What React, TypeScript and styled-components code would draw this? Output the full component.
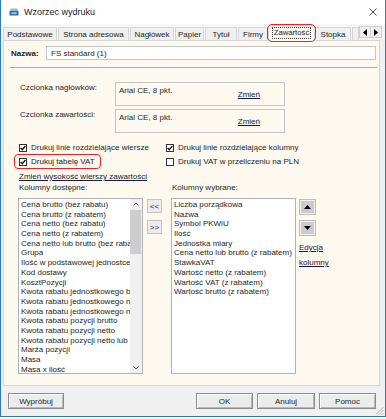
import React from "react";
import styled, { createGlobalStyle } from "styled-components";

const CREAM = "#fdf9ef";
const TEXT = "#1e1e1e";
const LINK = "#1a1a3a";

const GlobalStyle = createGlobalStyle`
  html, body { margin: 0; padding: 0; background: #ffffff; }
  body {
    font-family: "Liberation Sans", Arial, sans-serif;
    font-size: 8px;
    color: ${TEXT};
  }
  *, *::before, *::after { box-sizing: border-box; }
`;

const Window = styled.div`
  position: relative;
  width: 386px;
  height: 417px;
  display: flex;
  flex-direction: column;
  background: #f0f0f0;
  border: 1px solid #2b7bc6;
  border-top: none;
  overflow: hidden;
`;

const TitleBar = styled.div`
  flex: 0 0 24px;
  display: flex;
  align-items: center;
  padding: 0 0 1px 8px;
  background: #ffffff;
`;

const Title = styled.span`
  margin-left: 5px;
  font-size: 9px;
  color: #1a1a1a;
`;

const CloseIcon = styled.svg`
  margin-left: auto;
  margin-right: 8px;
`;

const TabStrip = styled.div`
  position: relative;
  z-index: 1;
  flex: 0 0 16px;
  display: flex;
  align-items: flex-end;
  gap: 1px;
  padding-left: 2px;
  background: #f7f7f7;
`;

const Tab = styled.div<{ $w: number; $active?: boolean }>`
  flex: 0 0 ${(p) => p.$w}px;
  height: ${(p) => (p.$active ? 16 : 13)}px;
  margin-bottom: ${(p) => (p.$active ? -1 : 0)}px;
  display: flex;
  align-items: center;
  justify-content: center;
  border: 1px solid #d6d6d6;
  border-bottom: none;
  background: ${(p) => (p.$active ? CREAM : "#f0f0f0")};
  white-space: nowrap;
  ${(p) =>
    p.$active
      ? `
    position: relative;
    z-index: 2;
    margin-left: -1px;
    margin-right: -1px;
    border-radius: 4px;
    outline: 1.5px solid #e2262c;
    padding-bottom: 1px;
  `
      : "overflow: hidden;"}
`;

const FocusText = styled.span`
  flex: none;
  padding: 0 1px;
  border: 1px dotted #444;
  font-size: 7.7px;
  line-height: 10px;
`;

const TabArrows = styled.div`
  flex: 0 0 23px;
  height: 12px;
  margin: 0 0 2px -1px;
  display: flex;
  border: 1px solid #cfcfcf;
  background: #f0f0f0;
`;

const ArrowHalf = styled.div`
  flex: 1;
  display: flex;
  align-items: center;
  justify-content: center;
  & + & { border-left: 1px solid #cfcfcf; }
`;

const Panel = styled.div`
  flex: 0 0 346px;
  margin: 0 5px 0 2px;
  display: flex;
  flex-direction: column;
  padding: 5px 2px 0 6px;
  background: ${CREAM};
  border: 1px solid #d6d6d6;
`;

const NameRow = styled.div`
  display: flex;
  align-items: center;
  height: 14px;
`;

const NameLabel = styled.span`
  flex: 0 0 36px;
  padding-left: 1px;
  font-weight: bold;
`;

const TextInput = styled.div`
  flex: 1;
  height: 14px;
  margin-right: 1px;
  padding-left: 4px;
  display: flex;
  align-items: center;
  background: #ffffff;
  border: 1px solid #c4c4c4;
`;

const Separator = styled.div`
  margin-top: 7px;
  height: 2px;
  border-top: 1px solid #a8a8a8;
  border-bottom: 1px solid #ffffff;
`;

const FontRow = styled.div<{ $gap: number }>`
  display: flex;
  margin-top: ${(p) => p.$gap}px;
  padding-left: 10px;
`;

const FontLabel = styled.span`
  flex: 0 0 95px;
  padding-top: 1px;
  line-height: 9px;
`;

const FontBox = styled.div`
  flex: 0 0 170px;
  height: 24px;
  display: flex;
  justify-content: space-between;
  padding: 3px 24px 0 3px;
  border: 1px solid #c4c4c4;
  line-height: 9px;
`;

const Link = styled.span`
  color: ${LINK};
  text-decoration: underline;
  line-height: 9px;
  white-space: nowrap;
`;

const BoxLink = styled(Link)`
  align-self: center;
  margin-top: -3px;
`;

const CheckGrid = styled.div`
  margin-top: 8px;
  padding-left: 9px;
  display: grid;
  grid-template-columns: 147px 1fr;
  grid-auto-rows: 13px;
  row-gap: 1px;
`;

const CheckItem = styled.label`
  display: flex;
  align-items: center;
  gap: 4px;
  white-space: nowrap;
`;

const Marked = styled(CheckItem)`
  justify-self: start;
  margin-left: -4px;
  padding: 0 5px 0 4px;
  border-radius: 3px;
  outline: 1.5px solid #e2262c;
`;

const Box = styled.span`
  flex: 0 0 8px;
  height: 8px;
  display: flex;
  align-items: center;
  justify-content: center;
  border: 1px solid #333333;
  background: #ffffff;
`;

const LinkRow = styled.div`
  margin-top: 4px;
  padding-left: 9px;
  line-height: 9px;
`;

const ColumnsArea = styled.div`
  margin-top: 2px;
  padding-left: 8px;
  display: flex;
`;

const Col = styled.div<{ $w?: number; $ml?: number }>`
  ${(p) => (p.$w ? `flex: 0 0 ${p.$w}px; width: ${p.$w}px;` : "")}
  min-width: 0;
  margin-left: ${(p) => p.$ml ?? 0}px;
  display: flex;
  flex-direction: column;
`;

const ColLabel = styled.span`
  height: 9px;
  line-height: 9px;
  padding-left: 1px;
  margin-bottom: 6px;
  white-space: nowrap;
`;

const ListBox = styled.div`
  height: 176px;
  display: flex;
  overflow: hidden;
  background: #ffffff;
  border: 1px solid #b2b2b2;
`;

const Items = styled.div`
  flex: 1;
  min-width: 0;
  overflow: hidden;
  padding: 1px 0 0 2px;
`;

const Item = styled.div`
  height: 9.7px;
  line-height: 9.7px;
  white-space: nowrap;
`;

const Scrollbar = styled.div`
  flex: 0 0 12px;
  display: flex;
  flex-direction: column;
  align-items: center;
  background: #f0f0f0;
  padding: 3px 1px 3px 0;
`;

const Thumb = styled.div`
  align-self: stretch;
  margin: 4px 0 0 0;
  height: 44px;
  background: #cdcdcd;
`;

const SmallBtn = styled.div<{ $mt: number }>`
  margin-top: ${(p) => p.$mt}px;
  height: 14px;
  display: flex;
  align-items: center;
  justify-content: center;
  background: #ececec;
  border: 1px solid #c4c4c4;
  font-size: 8px;
`;

const MoveBtn = styled.div<{ $mt: number }>`
  margin-top: ${(p) => p.$mt}px;
  width: 17px;
  height: 16px;
  display: flex;
  align-items: center;
  justify-content: center;
  background: #cbcbcb;
  border: 1px solid #bdbdbd;
  box-shadow: inset 0 0 0 1px #f2f2f2;
`;

const SideLink = styled(Link)<{ $mt: number }>`
  display: block;
  margin-top: ${(p) => p.$mt}px;
  height: 9px;
`;

const ButtonBar = styled.div`
  flex: 1;
  display: flex;
  align-items: flex-start;
  gap: 4px;
  padding: 7px 9px 0 7px;
`;

const Button = styled.div<{ $w: number }>`
  flex: 0 0 ${(p) => p.$w}px;
  height: 16px;
  display: flex;
  align-items: center;
  justify-content: center;
  background: #ececec;
  border: 1px solid #8c8c8c;
  box-shadow: inset 1px 1px 0 #ffffff, inset -1px -1px 0 #b8b8b8;
`;

const Spacer = styled.div`
  flex: 1;
`;

const Grip = styled.svg`
  position: absolute;
  right: 1px;
  bottom: 1px;
`;

const tabs = [
  { label: "Podstawowe", w: 54 },
  { label: "Strona adresowa", w: 71 },
  { label: "Nagłówek", w: 44 },
  { label: "Papier", w: 29 },
  { label: "Tytuł", w: 32 },
  { label: "Firmy", w: 30 },
  { label: "Zawartość", w: 47, active: true },
  { label: "Stopka", w: 36 },
  { label: "", w: 7 },
];

const available = [
  "Cena brutto (bez rabatu)",
  "Cena brutto (z rabatem)",
  "Cena netto (bez rabatu)",
  "Cena netto (z rabatem)",
  "Cena netto lub brutto (bez rabatu)",
  "Grupa",
  "Ilość w podstawowej jednostce",
  "Kod dostawy",
  "KosztPozycji",
  "Kwota rabatu jednostkowego brutto",
  "Kwota rabatu jednostkowego netto",
  "Kwota rabatu jednostkowego netto lub brutto",
  "Kwota rabatu pozycji brutto",
  "Kwota rabatu pozycji netto",
  "Kwota rabatu pozycji netto lub brutto",
  "Marża pozycji",
  "Masa",
  "Masa x ilość",
];

const chosen = [
  "Liczba porządkowa",
  "Nazwa",
  "Symbol PKWiU",
  "Ilość",
  "Jednostka miary",
  "Cena netto lub brutto (z rabatem)",
  "StawkaVAT",
  "Wartość netto (z rabatem)",
  "Wartość VAT (z rabatem)",
  "Wartość brutto (z rabatem)",
];

function Check({ on }: { on?: boolean }) {
  return (
    <Box>
      {on && (
        <svg width="6" height="6" viewBox="0 0 6 6">
          <path d="M0.6 3 L2.3 4.7 L5.4 1" fill="none" stroke="#111" strokeWidth="1.3" />
        </svg>
      )}
    </Box>
  );
}

function Triangle({ dir }: { dir: "up" | "down" | "left" | "right" }) {
  const pts = {
    up: "0,4 3.5,0 7,4",
    down: "0,0 7,0 3.5,4",
    left: "4,0 4,7 0,3.5",
    right: "0,0 0,7 4,3.5",
  }[dir];
  const vertical = dir === "up" || dir === "down";
  return (
    <svg width={vertical ? 7 : 4} height={vertical ? 4 : 7} viewBox={vertical ? "0 0 7 4" : "0 0 4 7"}>
      <polygon points={pts} fill="#000" />
    </svg>
  );
}

function Chevron({ up }: { up?: boolean }) {
  return (
    <svg width="6" height="4" viewBox="0 0 6 4">
      <path d={up ? "M0.5 3.5 L3 1 L5.5 3.5" : "M0.5 0.5 L3 3 L5.5 0.5"} fill="none" stroke="#555" strokeWidth="1" />
    </svg>
  );
}

export default function App() {
  return (
    <>
      <GlobalStyle />
      <Window>
        <TitleBar>
          <svg width="10" height="8" viewBox="0 0 10 8">
            <path d="M2 0.5 H8 L9.5 3 H0.5 Z" fill="#9fb6cc" />
            <rect x="0.5" y="3" width="9" height="4.5" fill="#2f6fb0" />
            <rect x="2.5" y="4.5" width="5" height="1.2" fill="#dfe9f4" />
          </svg>
          <Title>Wzorzec wydruku</Title>
          <CloseIcon width="8" height="8" viewBox="0 0 8 8">
            <path d="M0.5 0.5 L7.5 7.5 M7.5 0.5 L0.5 7.5" stroke="#333" strokeWidth="0.9" />
          </CloseIcon>
        </TitleBar>

        <TabStrip>
          {tabs.map((t, i) => (
            <Tab key={i} $w={t.w} $active={t.active}>
              {t.active ? <FocusText>{t.label}</FocusText> : t.label}
            </Tab>
          ))}
          <TabArrows>
            <ArrowHalf>
              <Triangle dir="left" />
            </ArrowHalf>
            <ArrowHalf>
              <Triangle dir="right" />
            </ArrowHalf>
          </TabArrows>
        </TabStrip>

        <Panel>
          <NameRow>
            <NameLabel>Nazwa:</NameLabel>
            <TextInput>FS standard (1)</TextInput>
          </NameRow>

          <Separator />

          <FontRow $gap={13}>
            <FontLabel>Czcionka nagłówków:</FontLabel>
            <FontBox>
              <span>Arial CE, 8 pkt.</span>
              <BoxLink>Zmień</BoxLink>
            </FontBox>
          </FontRow>
          <FontRow $gap={3}>
            <FontLabel>Czcionka zawartości:</FontLabel>
            <FontBox>
              <span>Arial CE, 8 pkt.</span>
              <BoxLink>Zmień</BoxLink>
            </FontBox>
          </FontRow>

          <CheckGrid>
            <CheckItem>
              <Check on />
              Drukuj linie rozdzielające wiersze
            </CheckItem>
            <CheckItem>
              <Check on />
              Drukuj linie rozdzielające kolumny
            </CheckItem>
            <Marked>
              <Check on />
              Drukuj tabelę VAT
            </Marked>
            <CheckItem>
              <Check />
              Drukuj VAT w przeliczeniu na PLN
            </CheckItem>
          </CheckGrid>

          <LinkRow>
            <Link>Zmień wysokość wierszy zawartości</Link>
          </LinkRow>

          <ColumnsArea>
            <Col $w={125}>
              <ColLabel>Kolumny dostępne:</ColLabel>
              <ListBox>
                <Items>
                  {available.map((a) => (
                    <Item key={a}>{a}</Item>
                  ))}
                </Items>
                <Scrollbar>
                  <Chevron up />
                  <Thumb />
                  <Spacer />
                  <Chevron />
                </Scrollbar>
              </ListBox>
            </Col>

            <Col $w={15} $ml={4}>
              <SmallBtn $mt={16}>&lt;&lt;</SmallBtn>
              <SmallBtn $mt={7}>&gt;&gt;</SmallBtn>
            </Col>

            <Col $w={125} $ml={9}>
              <ColLabel>Kolumny wybrane:</ColLabel>
              <ListBox>
                <Items>
                  {chosen.map((c) => (
                    <Item key={c}>{c}</Item>
                  ))}
                </Items>
              </ListBox>
            </Col>

            <Col $ml={3}>
              <MoveBtn $mt={16}>
                <Triangle dir="up" />
              </MoveBtn>
              <MoveBtn $mt={5}>
                <Triangle dir="down" />
              </MoveBtn>
              <SideLink $mt={7}>Edycja</SideLink>
              <SideLink $mt={6}>kolumny</SideLink>
            </Col>
          </ColumnsArea>
        </Panel>

        <ButtonBar>
          <Button $w={56}>Wypróbuj</Button>
          <Spacer />
          <Button $w={57}>OK</Button>
          <Button $w={58}>Anuluj</Button>
          <Button $w={57}>Pomoc</Button>
        </ButtonBar>

        <Grip width="10" height="10" viewBox="0 0 10 10">
          <path d="M9.5 2 L2 9.5 M9.5 5 L5 9.5 M9.5 8 L8 9.5" stroke="#a6a6a6" strokeWidth="0.8" />
        </Grip>
      </Window>
    </>
  );
}
